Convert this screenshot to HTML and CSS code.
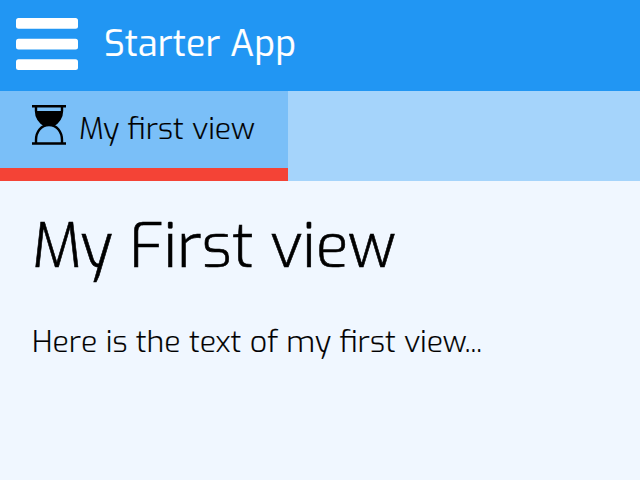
FILE: index.html
```html
<!DOCTYPE html>
<html>
  <head>
    <meta charset="utf-8">
    <title>Starter App</title>
    <link rel="stylesheet" href="styles.css">
  </head>
  <body>
    <header class="header">
      <svg class="menu-icon" width="62" height="52" viewBox="0 0 62 52">
        <rect width="62" height="10.7" rx="2.5" />
        <rect y="20.7" width="62" height="10.7" rx="2.5" />
        <rect y="41.3" width="62" height="10.7" rx="2.5" />
      </svg>
      <span class="title">Starter App</span>
    </header>

    <nav class="tabs">
      <a class="tab active">
        <svg class="tab-icon" width="34" height="40" viewBox="0 0 34 40">
          <path class="bar" d="M0 0H34V2.5H0ZM0 37.2H34V39.7H0Z" />
          <path class="glass" d="M4 2V6C4 12 7.5 17.5 13 20M30 2V6C30 12 26.5 17.5 21 20M4 38V35C4 27 9 20 17 20S30 27 30 35V38" />
          <path class="bar" d="M4 6H30C30 13 27 18 22.5 20.6H11.5C7 18 4 13 4 6Z" />
        </svg>
        <span class="tab-label">My first view</span>
      </a>
    </nav>

    <main class="view">
      <h1>My First view</h1>
      <p>Here is the text of my first view...</p>
    </main>
  </body>
</html>
```
FILE: styles.css
```css
* {
  box-sizing: border-box;
}

body {
  margin: 0;
  min-height: 100vh;
  background-color: #f0f7ff;
  color: #000;
  font-family: Exo, "Exo 2", Roboto, sans-serif;
  font-size: 30.2px;
  font-weight: 300;
}

.header {
  display: flex;
  align-items: center;
  height: 91px;
  padding: 0 16px;
  padding-bottom: 3px;
  background-color: #2196f3;
  color: #fff;
}

.menu-icon {
  margin-right: 26px;
  fill: #fff;
}

.title {
  font-size: 36px;
  font-weight: 400;
  line-height: 44px;
  white-space: nowrap;
  -webkit-text-stroke: 0.2px #fff;
}

.tabs {
  display: flex;
  height: 90px;
  background-color: #a5d4fb;
}

.tab {
  display: flex;
  align-items: center;
  width: 288px;
  padding: 0 0 9px 32px;
  background-color: #7abff8;
  border-bottom: 13px solid #f44336;
}

.tab-icon {
  margin-right: 13px;
}

.bar {
  fill: #000;
}

.glass {
  fill: none;
  stroke: #000;
  stroke-width: 2.4;
}

.tab-label {
  padding-top: 8px;
  line-height: 36px;
  white-space: nowrap;
  -webkit-text-stroke: 0.2px #000;
}

.view {
  padding: 29px 32px;
}

h1 {
  margin: 0;
  font-size: 60.6px;
  font-weight: 300;
  line-height: 74px;
  white-space: nowrap;
  -webkit-text-stroke: 0.6px #000;
}

p {
  margin: 39px 0 0;
  line-height: 38px;
  white-space: nowrap;
  -webkit-text-stroke: 0.2px #000;
}
```
